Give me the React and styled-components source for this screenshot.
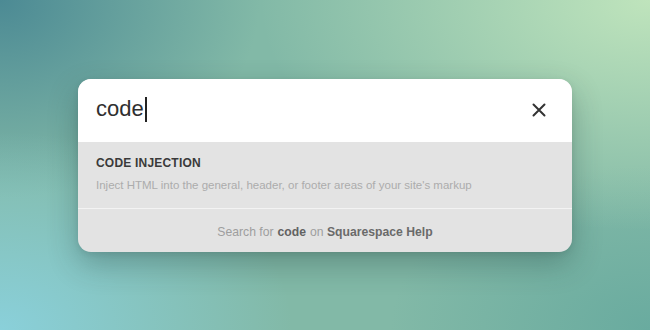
import styled, { createGlobalStyle } from "styled-components";

const Global = createGlobalStyle`
  html, body {
    margin: 0;
    padding: 0;
    height: 100%;
  }
  body {
    font-family: "Liberation Sans", Arial, sans-serif;
  }
`;

const Page = styled.div`
  width: 100vw;
  height: 100vh;
  display: flex;
  align-items: center;
  justify-content: center;
  background:
    radial-gradient(ellipse 60% 70% at 100% 0%, #bfe4bc 0%, rgba(191, 228, 188, 0) 100%),
    radial-gradient(ellipse 45% 60% at 0% 100%, #8ad0da 0%, rgba(138, 208, 218, 0) 100%),
    radial-gradient(ellipse 40% 60% at 0% 0%, #4c8a94 0%, rgba(76, 138, 148, 0) 100%),
    radial-gradient(ellipse 40% 50% at 100% 100%, #69ab9f 0%, rgba(105, 171, 159, 0) 100%),
    #82b9a7;
`;

const Card = styled.div`
  width: 494px;
  border-radius: 13px;
  overflow: hidden;
  background: #e3e3e3;
  box-shadow: 0 12px 30px rgba(20, 50, 50, 0.3), 0 2px 6px rgba(0, 0, 0, 0.08);
`;

const SearchBar = styled.div`
  height: 63px;
  background: #fff;
  display: flex;
  align-items: center;
  justify-content: space-between;
  padding: 0 23px 0 18px;
  box-sizing: border-box;
`;

const Query = styled.div`
  font-size: 22px;
  color: #2f2f2f;
  display: flex;
  align-items: center;
  padding-bottom: 2px;
`;

const Caret = styled.span`
  display: inline-block;
  width: 2px;
  height: 25px;
  background: #222;
  margin-left: 1px;
`;

const CloseButton = styled.button`
  border: 0;
  background: none;
  padding: 0;
  width: 20px;
  height: 20px;
  display: flex;
  align-items: center;
  justify-content: center;
  cursor: pointer;
  margin-top: -1px;
`;

const Result = styled.div`
  height: 67px;
  padding: 14px 18px 0;
  box-sizing: border-box;
  border-bottom: 1px solid #f3f3f3;
`;

const ResultTitle = styled.div`
  font-size: 12px;
  font-weight: 700;
  letter-spacing: 0.2px;
  color: #3a3a3a;
  line-height: 14px;
`;

const ResultText = styled.div`
  font-size: 11.5px;
  color: #acacac;
  margin-top: 9px;
  line-height: 13px;
`;

const Footer = styled.div`
  height: 43px;
  display: flex;
  align-items: center;
  justify-content: center;
  font-size: 12.2px;
  color: #9e9e9e;
  padding-top: 3px;
  box-sizing: border-box;
`;

const Strong = styled.b`
  color: #626262;
  font-weight: 700;
  margin: 0 4px;
`;

const Plain = styled.span`
  color: #6a6a6a;
  font-weight: 700;
`;

export default function App() {
  return (
    <>
      <Global />
      <Page>
        <Card>
          <SearchBar>
            <Query>
              code
              <Caret />
            </Query>
            <CloseButton aria-label="Close">
              <svg width="14" height="14" viewBox="0 0 14 14">
                <path
                  d="M1.5 1.5 L12.5 12.5 M12.5 1.5 L1.5 12.5"
                  stroke="#333"
                  strokeWidth="2"
                  strokeLinecap="round"
                />
              </svg>
            </CloseButton>
          </SearchBar>
          <Result>
            <ResultTitle>CODE INJECTION</ResultTitle>
            <ResultText>
              Inject HTML into the general, header, or footer areas of your site's markup
            </ResultText>
          </Result>
          <Footer>
            Search for<Strong>code</Strong>on&nbsp;<Plain>Squarespace Help</Plain>
          </Footer>
        </Card>
      </Page>
    </>
  );
}
